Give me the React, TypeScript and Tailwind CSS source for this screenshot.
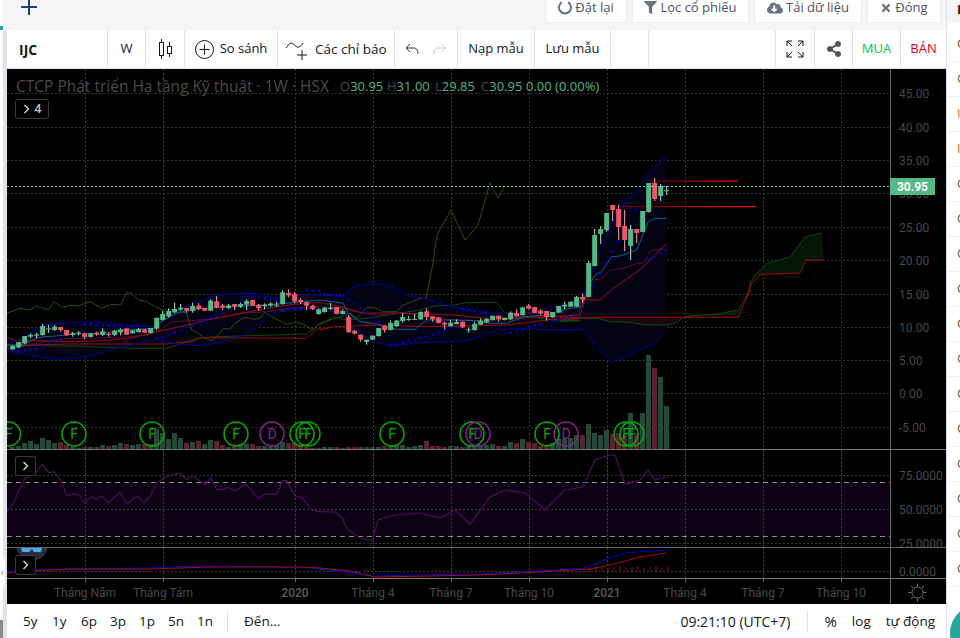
import { ReactNode } from "react";
import { FaCloudDownloadAlt, FaFilter, FaShareAlt, FaTimes } from "react-icons/fa";

// candles: body top, body bottom, wick top, wick bottom, up?
type Candle = [number, number, number, number, boolean];

const fromZoom = (ox: number, oy: number, arr: number[][]) =>
  arr.map(([x, y]) => [ox + x / 3, oy + y / 3]);
const toPts = (arr: number[][]) => arr.map(p => p[0].toFixed(1) + "," + p[1].toFixed(1)).join(" ");

const Z3 = (arr: number[][]) => fromZoom(0, 270, arr);
const Z8 = (arr: number[][]) => fromZoom(320, 270, arr);
const Z4 = (arr: number[][]) => fromZoom(560, 140, arr);
const Z5 = (arr: number[][]) => fromZoom(560, 290, arr);

const c3: Candle[] = [
  [228,238,226,240,true],[216,232,216,234,true],[198,220,198,222,true],[195,200,190,205,true],[193,197,188,204,true],
  [168,195,162,197,true],[175,177,165,188,true],[170,180,165,182,true],[171,180,171,185,false],[180,196,180,198,false],
  [190,195,186,200,true],[188,191,183,196,true],[191,201,188,207,false],[190,201,190,202,true],[188,194,185,197,false],
  [184,195,175,198,true],[191,195,188,200,false],[182,195,180,198,true],[178,187,175,196,true],[175,194,175,195,false],
  [181,190,181,191,true],[177,186,174,187,true],[178,188,178,189,false],[174,189,174,190,true],[144,176,142,180,true],
  [132,150,122,152,true],[123,139,115,142,true],[117,127,98,130,true],[113,119,102,122,true],[114,122,114,128,false],
  [108,123,98,128,true],[107,117,100,120,false],[114,122,114,123,false],[92,122,88,123,true],[94,113,78,115,false],
  [107,113,102,120,false],[106,114,102,118,true],[102,110,102,120,false],[102,110,98,114,true],[93,104,88,120,true],
  [90,107,90,108,false],[105,115,102,122,false],[105,109,100,118,true],[101,107,97,110,true],[104,105,95,110,true],
  [67,102,60,104,true],[69,76,58,82,false],[72,94,66,100,false],[90,96,84,102,false],[97,107,95,120,false],
  [107,117,104,120,false],[118,132,115,134,true],
];
const c8: Candle[] = [
  [113,126,111,128,true],[113,117,99,120,true],[111,132,111,133,false],[123,132,118,133,true],[141,186,135,189,false],
  [182,191,180,194,false],[194,209,194,215,false],[209,216,209,224,true],[197,209,197,210,true],[174,198,174,200,true],
  [167,180,167,188,false],[159,180,151,181,true],[152,169,150,170,true],[141,153,130,158,true],[147,149,138,152,true],
  [147,149,132,150,true],[126,148,124,150,true],[124,141,115,150,false],[139,148,139,155,false],[142,159,142,160,false],
  [158,164,155,178,false],[158,168,150,170,true],[156,162,148,163,true],[155,172,155,174,false],[178,180,172,188,true],
  [162,180,155,182,true],[152,164,145,165,true],[147,157,144,158,true],[137,150,137,151,true],[137,148,137,155,false],
  [144,150,144,151,true],[128,148,124,149,true],[129,139,118,140,false],[112,135,110,136,true],[107,116,102,118,false],
  [111,129,111,130,false],[122,131,118,134,false],[123,141,123,152,false],[126,142,126,143,true],[108,127,108,128,true],
  [104,110,95,117,true],[95,110,95,111,true],
];
const c4: Candle[] = [
  [471,500,468,500,true],[471,478,460,490,false],[369,471,363,472,true],[285,378,267,379,true],[267,282,258,312,true],
  [219,270,219,275,true],[195,210,195,243,false],[207,261,195,300,false],[258,300,210,333,false],[267,318,255,360,true],
  [267,279,267,309,false],[213,276,213,277,true],[129,216,129,218,true],[129,177,114,183,false],[138,168,132,183,true],
  [150,151,138,165,true],
];

const candles = [
  ...c3.map((c, i) => ({ n: i, top: 270 + c[0] / 3, bot: 270 + c[1] / 3, wt: 270 + c[2] / 3, wb: 270 + c[3] / 3, up: c[4] })),
  ...c8.map((c, i) => ({ n: 52 + i, top: 270 + c[0] / 3, bot: 270 + c[1] / 3, wt: 270 + c[2] / 3, wb: 270 + c[3] / 3, up: c[4] })),
  ...c4.map((c, i) => ({ n: 94 + i, top: 140 + c[0] / 3, bot: 140 + c[1] / 3, wt: 140 + c[2] / 3, wb: 140 + c[3] / 3, up: c[4] })),
];

// volume: signed height in px, negative = red bar
const volumes = [
  2,3,6,8,5,11,9,6,-7,-4,2,1,-2,2,-2,4,-3,4,6,-5,4,5,-5,5,20,16,10,16,11,-6,7,-8,5,9,-8,-4,2,-3,5,5,-5,-3,3,3,4,7,-6,-6,-3,-2,-1,1,
  2,2,-2,1,-2,-2,-2,2,2,2,-3,3,4,4,2,3,4,-8,-3,-3,-2,3,3,-2,3,3,4,4,5,-3,3,7,-6,10,-7,-6,-3,-3,6,10,
  10,11,14,-14,25,16,14,19,-15,-16,-14,36,-15,36,94,-81,72,43,
];

const upper = [
  ...Z3([[21,222],[70,205],[130,165],[190,160],[255,155],[320,158],[380,165],[450,170],[470,168],[520,128],[580,100],[640,78],[700,70],[780,72],[830,85],[880,75],[960,75]]),
  ...Z8([[68,78],[100,50],[130,43],[180,43],[230,55],[265,75],[330,90],[400,110],[440,120],[500,130],[560,130],[620,128],[680,115],[730,105],[780,85]]),
  ...Z4([[65,480],[100,380],[140,290],[180,190],[230,160],[265,100],[295,70],[320,45]]),
];
const lower = [
  ...Z3([[21,238],[60,250],[120,262],[170,268],[230,265],[280,255],[350,235],[420,220],[470,210],[530,222],[600,228],[660,218],[720,200],[770,175],[810,135],[860,120],[960,118]]),
  ...Z8([[70,132],[100,170],[150,210],[210,230],[280,220],[370,215],[440,212],[480,200],[530,180],[600,175],[680,180],[735,182]]),
  ...Z5([[0,120],[70,118],[105,170],[155,217],[200,200],[240,180],[280,165],[320,122]]),
];
const middle = [
  ...Z3([[21,225],[70,225],[100,208],[130,200],[170,198],[215,192],[300,190],[380,180],[460,175],[490,150],[530,130],[575,118],[650,112],[700,110],[780,105],[860,100],[960,90]]),
  ...Z8([[70,100],[85,130],[120,155],[170,162],[230,178],[285,178],[320,150],[400,150],[470,152],[510,160],[560,160],[610,140],[680,135],[730,125]]),
  ...Z5([[0,60],[65,50],[78,10]]),
  ...Z4([[90,430],[105,405],[125,395],[155,350],[180,348],[230,330],[265,245],[285,235],[320,235]]),
];
const maroon = [
  ...Z3([[21,228],[100,222],[150,212],[200,205],[260,205],[320,203],[380,200],[440,195],[480,182],[500,165],[520,155],[600,150],[650,145],[720,130],[800,125],[860,115],[960,110]]),
  ...Z8([[70,115],[110,125],[170,135],[250,130],[320,140],[400,150],[490,152],[560,148],[650,142],[780,135]]),
  ...Z4([[95,430],[105,420],[125,415],[150,390],[190,385],[230,370],[250,370],[270,335],[285,328],[320,328]]),
];
const red = [
  ...Z3([[21,203],[50,212],[120,212],[200,215],[300,212],[390,205],[470,185],[540,170],[620,150],[700,135],[800,115],[880,103],[960,97]]),
  ...Z8([[70,112],[130,130],[220,128],[320,132],[400,135],[500,145],[600,142],[700,140],[780,135]]),
  ...Z4([[60,480],[120,480],[160,445],[245,385],[320,310]]),
];
const kijun = [
  ...Z3([[21,235],[90,225],[200,222],[300,222],[380,222],[500,222],[575,215],[600,203],[920,205],[960,170]]),
  ...Z8([[0,180],[40,170],[180,165],[300,170],[420,168],[560,165],[700,148],[780,146]]),
  ...Z5([[0,82],[535,82],[570,0]]),
  [746,297],[752,283],[760,275],[767,274],[800,273],[806,260],[824,260],
];
const senkou = [
  ...Z3([[21,225],[230,228],[390,235],[500,235],[590,205],[650,200],[920,192],[960,160]]),
  ...Z8([[0,165],[40,140],[80,150],[140,145],[300,120],[345,108],[400,105],[440,98],[530,97],[555,130],[700,150],[780,152]]),
  ...Z5([[0,95],[60,85],[110,85],[150,95],[210,97],[260,105],[320,105],[350,97],[375,80],[420,75],[470,72],[535,60],[570,0]]),
  [750,282],[757,273],[768,263],[790,257],[805,237],[822,233],
];
const chikou = [
  ...Z3([[21,130],[60,115],[90,120],[110,108],[145,120],[163,95],[185,112],[215,105],[235,108],[270,95],[305,115],[335,103],[362,105],[380,67],[395,70],[415,90],[435,93],[470,112],[490,120],[525,118],[545,125],[560,130],[575,180],[595,190],[615,205],[635,212],[655,195],[670,175],[690,178],[705,160],[735,142],[760,148],[780,145],[795,127],[815,140],[840,152],[860,163],[890,157],[910,163],[940,180],[960,160]]),
  ...Z8([[60,140],[90,130],[110,145],[140,112],[160,112],[190,125],[230,125],[245,108],[300,85],[318,85],[335,0]]),
  [437,235],[451,210],[465,240],[478,225],[490,183],[498,198],[505,185],
];
const sar = [
  ...Z3([[38,245],[55,243],[73,241],[92,238],[110,235],[128,228],[146,218],[164,213],[182,208],[254,163],[272,163],[290,164],[308,167],[326,167],[344,167],[362,168],[380,170],[398,170],[416,170],[470,205],[488,203],[506,195],[524,187],[542,182],[560,172],[578,166],[596,158],[614,150],[632,145],[650,136],[668,130],[722,90],[740,78],[758,78],[776,82],[794,85],[812,88],[830,90],[848,122],[866,118],[884,115],[902,115],[920,60],[938,62],[956,63]]),
  ...Z8([[14,72],[32,73],[50,75],[68,78],[86,88],[104,100],[122,113],[140,128],[158,142],[176,155],[211,224],[229,224],[248,217],[266,214],[284,211],[302,205],[320,200],[338,194],[356,187],[374,181],[392,174],[410,172],[428,117],[446,118],[464,122],[482,125],[500,127],[572,187],[590,184],[608,180],[626,172],[644,167],[662,163],[698,155],[716,150],[734,145],[752,140],[770,135]]),
  ...Z4([[102,438],[120,402],[138,370],[157,334],[175,304],[193,197],[211,202],[229,208],[265,357],[283,350],[301,340],[319,330]]),
];
const rsi = [
  ...fromZoom(0, 450, [[21,185],[40,160],[60,115],[75,85],[105,70],[127,43],[147,68],[162,66],[185,95],[200,138],[218,132],[235,133],[255,160],[272,140],[290,148],[305,137],[325,158],[360,127],[380,162],[400,145],[415,140],[433,158],[450,140],[470,100],[490,85],[520,73],[540,70],[560,88],[578,77],[615,105],[632,83],[650,118],[668,118],[685,112],[705,122],[738,102],[775,145],[795,132],[830,133],[848,92],[860,92],[885,138],[905,142],[935,180],[960,185]]),
  [335,512],[342,518],[348,530],[360,538],[372,541],[378,520],[395,515],[420,513],[440,518],[455,510],[470,524],[490,497],[505,490],[525,493],[545,510],[565,490],[583,487],[595,460],[610,455],[615,455],[625,484],[640,480],[648,470],[655,480],[666,477],
];
const macdBlue = [[7,572],[30,570],[60,569],[150,568],[200,566],[300,567],[320,569],[345,572],[370,576],[420,575],[480,574],[540,571],[585,568],[605,560],[625,553],[650,551],[666,550]];
const macdRed = [[7,573],[30,571],[70,569],[150,569],[210,567],[300,567],[320,568],[350,571],[375,577],[430,576],[480,575],[540,572],[590,569],[610,565],[640,557],[666,553]];

const gridX = [85.5, 163.5, 295.5, 373.5, 451.5, 529.5, 607.5, 685.5, 763.5, 841.5];
const gridY = [93.5, 127.5, 160.5, 193.5, 227.5, 260.5, 294.5, 327.5, 360.5, 393.5, 427.5];
const priceLabels = ["45.00", "40.00", "35.00", "30.00", "25.00", "20.00", "15.00", "10.00", "5.00", "0.00", "-5.00"];

const events = [
  { x: 8.5, l: "F" }, { x: 74, l: "F" }, { x: 152, l: "F" }, { x: 236, l: "F" }, { x: 272, l: "D" },
  { x: 302, l: "F" }, { x: 308, l: "F" }, { x: 392, l: "F" }, { x: 472, l: "F" }, { x: 478, l: "D" },
  { x: 547, l: "F" }, { x: 566, l: "D" }, { x: 626, l: "F" }, { x: 632, l: "F" },
];

const timeLabels = [
  { x: 85, t: "Tháng Năm" }, { x: 163, t: "Tháng Tám" }, { x: 295, t: "2020", strong: true }, { x: 373, t: "Tháng 4" },
  { x: 451, t: "Tháng 7" }, { x: 529, t: "Tháng 10" }, { x: 607, t: "2021", strong: true }, { x: 685, t: "Tháng 4" },
  { x: 763, t: "Tháng 7" }, { x: 841, t: "Tháng 10" },
];

const axisFont = "Roboto, sans-serif";

function Chart() {
  return (
    <svg width={939} height={535} viewBox="7 69 939 535" className="block" style={{ fontFamily: axisFont }}>
      <rect x={7} y={69} width={939} height={535} fill="#000" />
      <clipPath id="plot"><rect x={7} y={69} width={883} height={380} /></clipPath>

      {gridX.map(x => <line key={x} x1={x} x2={x} y1={69} y2={578} stroke="#3a3a3a" strokeDasharray="2 2" />)}
      {gridY.map(y => <line key={y} x1={7} x2={890} y1={y} y2={y} stroke="#333" strokeDasharray="2 2" />)}

      <g clipPath="url(#plot)">
        <polygon points={toPts([...upper, ...[...lower].reverse()])} fill="#030314" />
        <polygon points={toPts([...Z5([[375,80],[420,75],[470,72],[535,60],[570,0]]), [750,282],[757,273],[768,263],[790,257],[805,237],[822,233],[824,260],[806,260],[800,273],[767,274],[760,275],[752,283],[746,297],...Z5([[535,82],[375,82]])])} fill="#061606" />
        <polygon points={toPts(Z5([[0,82],[60,85],[110,85],[150,95],[210,97],[260,105],[320,105],[350,97],[375,82]]))} fill="#1c0610" />
        <polyline points={toPts(senkou)} fill="none" stroke="#0c4a0c" strokeWidth={1} />
        <polyline points={toPts(chikou)} fill="none" stroke="#2a5010" strokeWidth={1} />
        <polyline points={toPts(maroon)} fill="none" stroke="#5a1024" strokeWidth={1} />
        <polyline points={toPts(red)} fill="none" stroke="#a00a18" strokeWidth={1} />
        <polyline points={toPts(kijun)} fill="none" stroke="#a00a0a" strokeWidth={1} />
        <polyline points={toPts(upper)} fill="none" stroke="#0000a0" strokeWidth={1} />
        <polyline points={toPts(lower)} fill="none" stroke="#0000a0" strokeWidth={1} />
        <polyline points={toPts(middle)} fill="none" stroke="#0e5f9c" strokeWidth={1} />

        {sar.map((p, i) => (
          <path key={i} d={`M${p[0] - 1.5} ${p[1]}h3M${p[0]} ${p[1] - 1.5}v3`} stroke="#0000d0" strokeWidth={1} />
        ))}

        <defs>
          <linearGradient id="fadeRed" x1="0" x2="1" y1="0" y2="0">
            <stop offset="0" stopColor="#500" />
            <stop offset="1" stopColor="#f00" />
          </linearGradient>
        </defs>
        <rect x={648} y={180.5} width={90} height={1.2} fill="url(#fadeRed)" />
        <rect x={620} y={206} width={136} height={1.2} fill="url(#fadeRed)" />

        {volumes.map((v, i) => {
          const h = Math.abs(v);
          return <rect key={i} x={10 + i * 6} y={449 - h} width={5} height={h} fill={v < 0 ? "#5c2230" : "#24493a"} />;
        })}

        {candles.map(c => {
          const x = 12.67 + c.n * 6;
          return (
            <g key={c.n}>
              <rect x={x - 0.5} y={c.wt} width={1} height={c.wb - c.wt} fill={c.up ? "#b9e3d0" : "#f9a8b4"} />
              <rect x={x - 2.5} y={c.top} width={5} height={Math.max(c.bot - c.top, 1)} fill={c.up ? "#53b987" : "#f0566a"} />
            </g>
          );
        })}

        {events.map((e, i) => {
          const color = e.l === "F" ? "#00b000" : "#8d1f8d";
          return (
            <g key={i}>
              <circle cx={e.x} cy={434} r={12} fill="none" stroke={color} strokeWidth={1.5} />
              <text x={e.x} y={439} textAnchor="middle" fontSize={14} fill={color}>{e.l}</text>
            </g>
          );
        })}
      </g>

      <line x1={7} x2={890} y1={186.5} y2={186.5} stroke="#5fe0a2" strokeDasharray="2 2" />

      {/* RSI pane */}
      <rect x={7} y={482.5} width={883} height={54} fill="#0c0214" />
      {gridX.map(x => <line key={x} x1={x} x2={x} y1={450} y2={547} stroke="#3a3a3a" strokeDasharray="2 2" />)}
      <line x1={7} x2={890} y1={509.5} y2={509.5} stroke="#3a3a3a" strokeDasharray="2 2" />
      <line x1={7} x2={890} y1={475.5} y2={475.5} stroke="#3a3a3a" strokeDasharray="2 2" />
      <line x1={7} x2={890} y1={543.5} y2={543.5} stroke="#3a3a3a" strokeDasharray="2 2" />
      <line x1={7} x2={890} y1={482.5} y2={482.5} stroke="#8c8c8c" strokeDasharray="5 4" />
      <line x1={7} x2={890} y1={536.5} y2={536.5} stroke="#8c8c8c" strokeDasharray="5 4" />
      <polyline points={toPts(rsi)} fill="none" stroke="#4d0f5c" strokeWidth={1.2} />

      {/* axis labels */}
      {priceLabels.map((t, i) => (
        <text key={t} x={899} y={gridY[i] + 4.5} fontSize={12} fill="#484848">{t}</text>
      ))}
      <text x={899} y={480} fontSize={12} fill="#484848">75.0000</text>
      <text x={899} y={514} fontSize={12} fill="#484848">50.0000</text>
      <text x={899} y={548} fontSize={12} fill="#484848">25.0000</text>

      {/* MACD pane */}
      <rect x={7} y={548} width={939} height={30} fill="#000" />
      <text x={899} y={576} fontSize={12} fill="#484848">0.0000</text>
      {gridX.map(x => <line key={x} x1={x} x2={x} y1={548} y2={578} stroke="#3a3a3a" strokeDasharray="2 2" />)}
      <line x1={7} x2={890} y1={571.5} y2={571.5} stroke="#3a3a3a" strokeDasharray="2 2" />
      {Array.from({ length: 14 }).map((_, i) => (
        <line key={i} x1={590 + i * 6} x2={590 + i * 6} y1={571} y2={568 - (i % 3)} stroke="#8a1a22" />
      ))}
      <polyline points={toPts(macdBlue)} fill="none" stroke="#0000c8" strokeWidth={1} />
      <polyline points={toPts(macdRed)} fill="none" stroke="#a80a1c" strokeWidth={1} />

      {/* chat bubble peeking from under the pane edge */}
      <clipPath id="bubble"><rect x={7} y={548} width={60} height={20} /></clipPath>
      <g clipPath="url(#bubble)">
        <circle cx={32} cy={545} r={16} fill="#2a2e39" />
        <path d="M21 548h21l-1 4h-7l-2-3-3 3h-7z" fill="#4aa8ee" />
      </g>

      <line x1={7} x2={946} y1={449.5} y2={449.5} stroke="#777" />
      <line x1={7} x2={946} y1={547.5} y2={547.5} stroke="#666" />
      <line x1={7} x2={946} y1={578.5} y2={578.5} stroke="#777" />
      <line x1={890.5} x2={890.5} y1={69} y2={604} stroke="#666" />

      <rect x={890} y={178} width={45} height={17} fill="#53b987" />
      <text x={912.5} y={191} textAnchor="middle" fontSize={12} fontWeight={700} fill="#fff">30.95</text>

      {timeLabels.map(l => (
        <text key={l.x} x={l.x} y={597} textAnchor="middle" fontSize={12} fontWeight={l.strong ? 500 : 400} fill={l.strong ? "#5e5e5e" : "#484848"}>{l.t}</text>
      ))}
      {gridX.map(x => <line key={x} x1={x} x2={x} y1={578} y2={582} stroke="#666" />)}

      {/* settings */}
      <g stroke="#777" fill="none" transform="translate(917.5 592.5)">
        <circle r={5.5} />
        <path d="M0-9v3M0 6v3M-9 0h3M6 0h3M-6.5-6.5l2 2M4.5 4.5l2 2M-6.5 6.5l2-2M4.5-4.5l2-2" />
      </g>
    </svg>
  );
}

function Chevron() {
  return (
    <svg width="7" height="10" viewBox="0 0 7 10" fill="none" stroke="#d8d8d8" strokeWidth="1.4">
      <path d="M1.5 1l4 4-4 4" />
    </svg>
  );
}

function Cell({ w, children, className = "" }: { w: string; children?: ReactNode; className?: string }) {
  return (
    <div className={`${w} h-full flex items-center justify-center gap-[6px] border-r border-[#e0e3eb] shrink-0 ${className}`}>
      {children}
    </div>
  );
}

function TopButton({ w, icon, label }: { w: string; icon: ReactNode; label: string }) {
  return (
    <button className={`${w} h-[23px] pb-[7px] bg-white border-b border-x border-[#ececf0] flex items-center justify-center gap-[3px] text-[13px] text-[#50535e]`}>
      {icon}
      {label}
    </button>
  );
}

function Toolbar() {
  return (
    <div className="h-[39px] bg-white border-b border-[#e0e3eb] flex text-[13px] text-[#131722]">
      <Cell w="w-[101px]" className="justify-start pl-[12px] font-bold text-[14px]">IJC</Cell>
      <Cell w="w-[38px]">W</Cell>
      <Cell w="w-[39px]">
        <svg width="16" height="20" viewBox="0 0 16 20" fill="none" stroke="#131722">
          <path d="M4.5 0v3M4.5 17v3M12.5 3v4M12.5 14v4" />
          <rect x="2.5" y="3.5" width="4" height="13" />
          <rect x="10.5" y="7.5" width="4" height="7" />
        </svg>
      </Cell>
      <Cell w="w-[93px]">
        <svg width="19" height="19" viewBox="0 0 19 19" fill="none" stroke="#131722">
          <circle cx="9.5" cy="9.5" r="9" />
          <path d="M9.5 4.5v10M4.5 9.5h10" />
        </svg>
        So sánh
      </Cell>
      <Cell w="w-[117px]" className="justify-start pl-[7px] gap-[3px] text-[13.5px]">
        <svg width="24" height="22" viewBox="0 0 24 22" fill="none" stroke="#131722" className="mt-[3px]">
          <path d="M1 8C3 6 4 3 6 3s4 3 6 4 4-1 6-4" />
          <path d="M17 10v10M12 15h10" />
        </svg>
        Các chỉ báo
      </Cell>
      <Cell w="w-[63px]" className="gap-[14px]">
        <svg width="14" height="12" viewBox="0 0 14 12" fill="none" stroke="#333">
          <path d="M5 1L1 5l4 4M1 5h8c3 0 4 3 4 6" />
        </svg>
        <svg width="14" height="12" viewBox="0 0 14 12" fill="none" stroke="#c8ccd6">
          <path d="M9 1l4 4-4 4M13 5H5C2 5 1 8 1 11" />
        </svg>
      </Cell>
      <Cell w="w-[77px]">Nạp mẫu</Cell>
      <Cell w="w-[76px]">Lưu mẫu</Cell>
      <Cell w="w-[38px]" />
      <Cell w="w-[127px]" />
      <Cell w="w-[39px]">
        <svg width="18" height="18" viewBox="0 0 18 18" fill="none" stroke="#131722">
          <path d="M1 6V1h5M1 1l5 5M12 1h5v5M17 1l-5 5M1 12v5h5M1 17l5-5M17 12v5h-5M17 17l-5-5" />
        </svg>
      </Cell>
      <Cell w="w-[38px]"><FaShareAlt size={16} color="#50535e" /></Cell>
      <Cell w="w-[48px]" className="text-[#00c853]">MUA</Cell>
      <Cell w="w-[45px]" className="text-[#e00012] border-r-0">BÁN</Cell>
    </div>
  );
}

function BottomBar() {
  return (
    <div className="h-[34px] bg-white flex items-center text-[13.5px] text-[#131722]">
      <div className="flex w-[220px] pl-[16px]">
        {["5y", "1y", "6p", "3p", "1p", "5n", "1n"].map(t => (
          <span key={t} className="w-[29px]">{t}</span>
        ))}
      </div>
      <div className="w-px h-[21px] bg-[#e0e3eb]" />
      <span className="ml-[16px]">Đến...</span>
      <div className="flex-1" />
      <span className="text-[14px]">09:21:10 (UTC+7)</span>
      <div className="w-px h-[21px] bg-[#e0e3eb] ml-[17px]" />
      <span className="ml-[16px] text-[15px]">%</span>
      <span className="ml-[15px]">log</span>
      <span className="ml-[15px] mr-[11px]">tự động</span>
    </div>
  );
}

export default function App() {
  return (
    <div className="w-[960px] h-[638px] flex overflow-hidden bg-white relative" style={{ fontFamily: "'Open Sans', sans-serif" }}>
      <div className="w-[7px] h-full flex shrink-0">
        <div className="w-[3px] h-full flex flex-col bg-white">
          <div className="h-[26px]" />
          <div className="h-[4px] bg-[#26a69a]" />
          <div className="flex-1" />
          <div className="h-[18px] bg-[#8a8a8a]" />
        </div>
        <div className="w-[4px] h-full flex flex-col bg-[#e0e3eb]">
          <div className="h-[30px] bg-[#f5f5f7]" />
        </div>
      </div>

      <div className="w-[939px] shrink-0 flex flex-col">
        <div className="h-[30px] bg-[#f5f5f7] flex shrink-0">
          <svg width="16" height="15" viewBox="0 0 16 15" className="ml-[14px]" fill="none" stroke="#1f3f77" strokeWidth="2">
            <path d="M8 0v15M0 7h16" />
          </svg>
          <div className="flex-1" />
          <div className="flex gap-[5px] pr-[5px]">
            <TopButton
              w="w-[82px]"
              label="Đặt lại"
              icon={
                <svg width="14" height="15" viewBox="0 0 14 15" fill="none" stroke="#6b7280" strokeWidth="2">
                  <path d="M4 2.2a6 6 0 1 0 6 0" />
                </svg>
              }
            />
            <TopButton w="w-[117px]" label="Lọc cổ phiếu" icon={<FaFilter size={13} color="#6b7280" />} />
            <TopButton w="w-[108px]" label="Tải dữ liệu" icon={<FaCloudDownloadAlt size={16} color="#6b7280" />} />
            <TopButton w="w-[74px]" label="Đóng" icon={<FaTimes size={12} color="#6b7280" />} />
          </div>
        </div>
        <Toolbar />
        <div className="relative h-[535px] shrink-0">
          <Chart />
          <div className="absolute left-[9px] top-[9px] flex text-[15.5px] leading-[16px] text-[#4a4a4a] whitespace-nowrap">
            <span className="w-[324px]">CTCP Phát triển Hạ tầng Kỹ thuật · 1W · HSX</span>
            <span className="text-[13px] flex">
              <span className="w-[47px]">O<span className="text-[#53b987]">30.95</span></span>
              <span className="w-[48px]">H<span className="text-[#53b987]">31.00</span></span>
              <span className="w-[46px]">L<span className="text-[#53b987]">29.85</span></span>
              <span className="w-[45px]">C<span className="text-[#53b987]">30.95</span></span>
              <span className="text-[#53b987]">0.00 (0.00%)</span>
            </span>
          </div>
          <div className="absolute left-[8px] top-[30px] w-[34px] h-[20px] border border-[#3a3a3a] rounded-[3px] bg-black flex items-center justify-center gap-[5px] text-[12px] font-semibold text-[#c8c8c8]">
            <Chevron />4
          </div>
          <div className="absolute left-[8px] top-[387px] w-[21px] h-[20px] border border-[#3a3a3a] rounded-[3px] bg-black flex items-center justify-center">
            <Chevron />
          </div>
          <div className="absolute left-[8px] top-[486px] w-[21px] h-[20px] border border-[#3a3a3a] rounded-[3px] bg-black flex items-center justify-center">
            <Chevron />
          </div>
        </div>
        <BottomBar />
      </div>

      <div className="flex-1 border-l border-[#e0e3eb] flex flex-col overflow-hidden relative">
        <div className="h-[23px] bg-[#f5f5f5] pl-[10px] text-[13px] font-bold text-[#222]">I</div>
        <div className="h-[4px]" />
        {Array.from({ length: 16 }).map((_, i) => (
          <div key={i} className={`h-[35px] shrink-0 border-b border-[#eef0f4] pl-[10px] flex items-center text-[13px] ${i === 2 || i === 3 ? "text-[#c77d3a]" : "text-[#6b5a40]"}`}>
            {i === 2 || i === 3 ? "I" : "C"}
          </div>
        ))}
        <div className="absolute left-[3px] top-[605px] w-[56px] h-[56px] rounded-full bg-[#26a69a]" />
      </div>

      <div className="absolute left-0 top-[558px] w-[5px] h-[28px] bg-white rounded-r-[4px] flex items-center justify-center text-[11px] text-[#9a9a9a] overflow-hidden">‹</div>
    </div>
  );
}
